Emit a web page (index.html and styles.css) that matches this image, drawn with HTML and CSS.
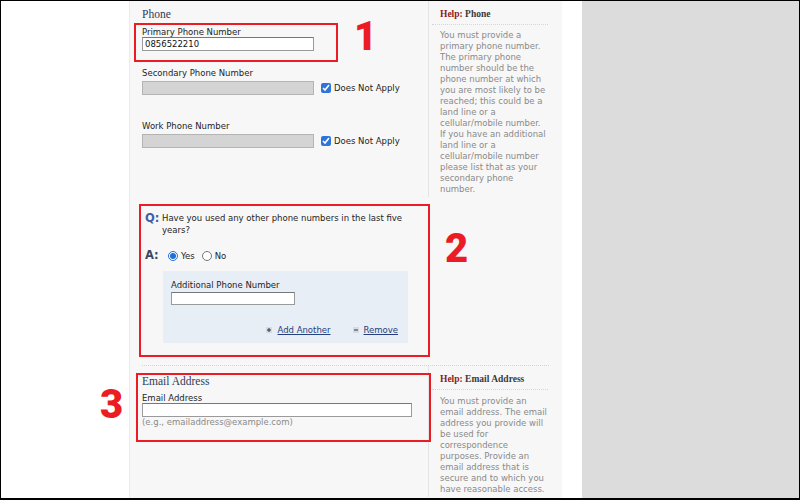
FILE: index.html
```html
<!DOCTYPE html>
<html lang="en">
<head>
    <meta charset="UTF-8">
    <title>Phone and Email</title>
    <link rel="stylesheet" href="styles.css">
</head>
<body>
<div class="screen">
    <div class="frame">
        <div class="gutter"></div>

        <div class="panel">
            <!-- Phone -->
            <section class="row row--phone">
                <div class="main">
                    <h2 class="sec-title">Phone</h2>

                    <div class="field field--first">
                        <label class="field-label">Primary Phone Number</label>
                        <input type="text" class="text-input" value="0856522210">
                    </div>

                    <div class="field">
                        <label class="field-label">Secondary Phone Number</label>
                        <div class="inline-row">
                            <input type="text" class="text-input text-input--off" disabled>
                            <label class="na"><input type="checkbox" checked> Does Not Apply</label>
                        </div>
                    </div>

                    <div class="field field--spaced">
                        <label class="field-label">Work Phone Number</label>
                        <div class="inline-row">
                            <input type="text" class="text-input text-input--off" disabled>
                            <label class="na"><input type="checkbox" checked> Does Not Apply</label>
                        </div>
                    </div>
                </div>

                <aside class="help">
                    <h3 class="help-title"><span class="help-tag">Help:</span> Phone</h3>
                    <p class="help-text">You must provide a primary phone number. The primary phone number should be the phone number at which you are most likely to be reached; this could be a land line or a cellular/mobile number. If you have an additional land line or a cellular/mobile number please list that as your secondary phone number.</p>
                </aside>
            </section>

            <!-- Other numbers question -->
            <section class="qa">
                <div class="qa-line">
                    <span class="qa-mark qa-mark--q">Q:</span>
                    <span class="qa-text">Have you used any other phone numbers in the last five years?</span>
                </div>
                <div class="qa-line qa-line--answer">
                    <span class="qa-mark qa-mark--a">A:</span>
                    <label class="choice"><input type="radio" name="other" checked> Yes</label>
                    <label class="choice"><input type="radio" name="other"> No</label>
                </div>

                <div class="extra-box">
                    <label class="field-label">Additional Phone Number</label>
                    <input type="text" class="text-input text-input--short">
                    <div class="extra-actions">
                        <a href="#" class="action">
                            <svg width="6" height="6" viewBox="0 0 6 6"><rect width="6" height="6" fill="#d5dae3"/><path d="M3 1v4M1 3h4" stroke="#2b3550" stroke-width="1"/></svg>
                            Add Another
                        </a>
                        <a href="#" class="action">
                            <svg width="6" height="6" viewBox="0 0 6 6"><rect width="6" height="6" fill="#d5dae3"/><path d="M1 3h4" stroke="#2b3550" stroke-width="1"/></svg>
                            Remove
                        </a>
                    </div>
                </div>
            </section>

            <hr class="divider">

            <!-- Email -->
            <section class="row row--email">
                <div class="main main--email">
                    <h2 class="sec-title">Email Address</h2>
                    <div class="field field--email">
                        <label class="field-label">Email Address</label>
                        <input type="text" class="text-input text-input--wide">
                        <div class="hint">(e.g., emailaddress@example.com)</div>
                    </div>
                </div>

                <aside class="help help--email">
                    <h3 class="help-title"><span class="help-tag">Help:</span> Email Address</h3>
                    <p class="help-text">You must provide an email address. The email address you provide will be used for correspondence purposes. Provide an email address that is secure and to which you have reasonable access.</p>
                </aside>
            </section>
        </div>

        <div class="strip"></div>
        <div class="backdrop"></div>
    </div>

    <!-- annotation marks over the page -->
    <div class="mark-box mark-box--1"></div>
    <div class="mark-box mark-box--2"></div>
    <div class="mark-box mark-box--3"></div>
    <span class="mark-num mark-num--1">1</span>
    <span class="mark-num mark-num--2">2</span>
    <span class="mark-num mark-num--3">3</span>
</div>
</body>
</html>
```

FILE: styles.css
```css
:root {
    --panel: #f7f7f7;
    --line: #e4e4e4;
    --ink: #1e1e1e;
    --muted: #8a8a8a;
    --title: #2f3b59;
    --link: #26407e;
    --mark: #ec1c24;
}

body {
    margin: 0;
    font-family: "DejaVu Sans", Verdana, sans-serif;
    color: var(--ink);
}

.screen {
    position: relative;
    width: 800px;
    height: 500px;
    overflow: hidden;
}

.frame {
    display: flex;
    width: 800px;
    height: 500px;
    box-sizing: border-box;
    border: 1px solid #000;
    border-bottom-width: 2px;
    background: #fff;
}

.gutter {
    width: 128px;
    flex-shrink: 0;
}

.panel {
    width: 433px;
    flex-shrink: 0;
    box-sizing: border-box;
    border-left: 1px solid #ececec;
    background: var(--panel);
}

.strip {
    width: 20px;
    flex-shrink: 0;
    background: #fff;
}

.backdrop {
    flex: 1;
    background: #dcdcdc;
}

/* 两栏：表单 + 帮助 */
.row {
    display: flex;
}

.main {
    width: 298px;
    box-sizing: border-box;
    padding: 6px 0 0 12px;
}

.sec-title {
    margin: 0;
    font-family: "Liberation Serif", "Times New Roman", serif;
    font-size: 11.5px;
    font-weight: normal;
    line-height: 14px;
    color: var(--title);
}

.field {
    margin-top: 18px;
}

.field--first {
    margin-top: 7px;
}

.field--spaced {
    margin-top: 27px;
}

.field-label {
    display: block;
    font-size: 8.5px;
    line-height: 9px;
    color: var(--ink);
}

.text-input {
    display: block;
    width: 172px;
    height: 14px;
    box-sizing: border-box;
    margin: 0;
    padding: 0 2px;
    border: 1px solid #9a9a9a;
    border-top-color: #777;
    background: #fff;
    font-family: "DejaVu Sans", Verdana, sans-serif;
    font-size: 8.5px;
    color: #111;
}

.text-input--off {
    background: #d4d4d4;
    border-color: #b4b4b4;
}

.text-input--short {
    width: 124px;
    height: 13px;
    margin-top: 2px;
}

.text-input--wide {
    width: 270px;
}

.inline-row {
    display: flex;
    align-items: center;
    gap: 7px;
    margin-top: 3px;
}

.na {
    display: flex;
    align-items: center;
    gap: 3px;
    font-size: 8.5px;
}

.na input {
    width: 10px;
    height: 10px;
    margin: 0;
    accent-color: #2f74d8;
}

/* 帮助栏 */
.help {
    width: 134px;
    box-sizing: border-box;
    border-left: 1px solid var(--line);
    padding: 0 14px 2px 3px;
}

.help-title {
    margin: 0;
    padding: 7px 0 4px 8px;
    border-bottom: 1px dotted #d6d6d6;
    font-family: "Liberation Serif", "Times New Roman", serif;
    font-size: 9.5px;
    font-weight: bold;
    line-height: 12px;
    color: #3a3a3a;
}

.help-tag {
    color: #8c1c1c;
}

.help-text {
    margin: 5px 0 0;
    padding-left: 8px;
    font-size: 8.5px;
    line-height: 11px;
    color: var(--muted);
}

/* 问答区 */
.qa {
    width: 298px;
    box-sizing: border-box;
    padding: 16px 20px 22px 15px;
}

.qa-line {
    display: flex;
    align-items: flex-start;
}

.qa-line--answer {
    align-items: center;
    margin-top: 14px;
    height: 12px;
}

.qa-mark {
    width: 17px;
    flex-shrink: 0;
    font-size: 11.5px;
    font-weight: bold;
    line-height: 11.5px;
}

.qa-mark--q {
    color: #3b62a8;
}

.qa-mark--a {
    width: 23px;
    color: #3a4660;
}

.qa-text {
    font-size: 8.5px;
    line-height: 11.5px;
}

.choice {
    display: flex;
    align-items: center;
    gap: 3px;
    margin-right: 7px;
    font-size: 8.5px;
}

.choice input {
    width: 10px;
    height: 10px;
    margin: 0;
    accent-color: #1f6fd8;
}

.extra-box {
    margin: 9px 0 0 18px;
    padding: 10px 10px 8px 8px;
    background: #e8eef5;
}

.extra-actions {
    display: flex;
    justify-content: flex-end;
    gap: 22px;
    margin-top: 20px;
    line-height: 10px;
}

.action {
    display: flex;
    align-items: center;
    gap: 5px;
    font-size: 8.5px;
    color: var(--link);
}

.divider {
    margin: 0 13px 0 12px;
    border: 0;
    border-top: 1px dotted #d4d4d4;
}

.main--email {
    padding-top: 8px;
}

.field--email {
    margin-top: 6px;
}

.hint {
    margin-top: 1px;
    font-size: 8.5px;
    line-height: 9px;
    color: var(--muted);
}

.help--email .help-text {
    margin-top: 6px;
}

/* 红色标注 */
.mark-box {
    position: absolute;
    box-sizing: border-box;
    border: 2px solid var(--mark);
}

.mark-box--1 { left: 134px; top: 23px; width: 204px; height: 39px; }
.mark-box--2 { left: 139px; top: 204px; width: 291px; height: 153px; }
.mark-box--3 { left: 136px; top: 373px; width: 295px; height: 69px; }

.mark-num {
    position: absolute;
    font-family: Roboto, "Liberation Sans", sans-serif;
    font-weight: 900;
    font-size: 40px;
    line-height: 1;
    color: var(--mark);
}

.mark-num--1 { left: 354px; top: 17px; }
.mark-num--2 { left: 445px; top: 229px; }
.mark-num--3 { left: 100px; top: 385px; }
```
